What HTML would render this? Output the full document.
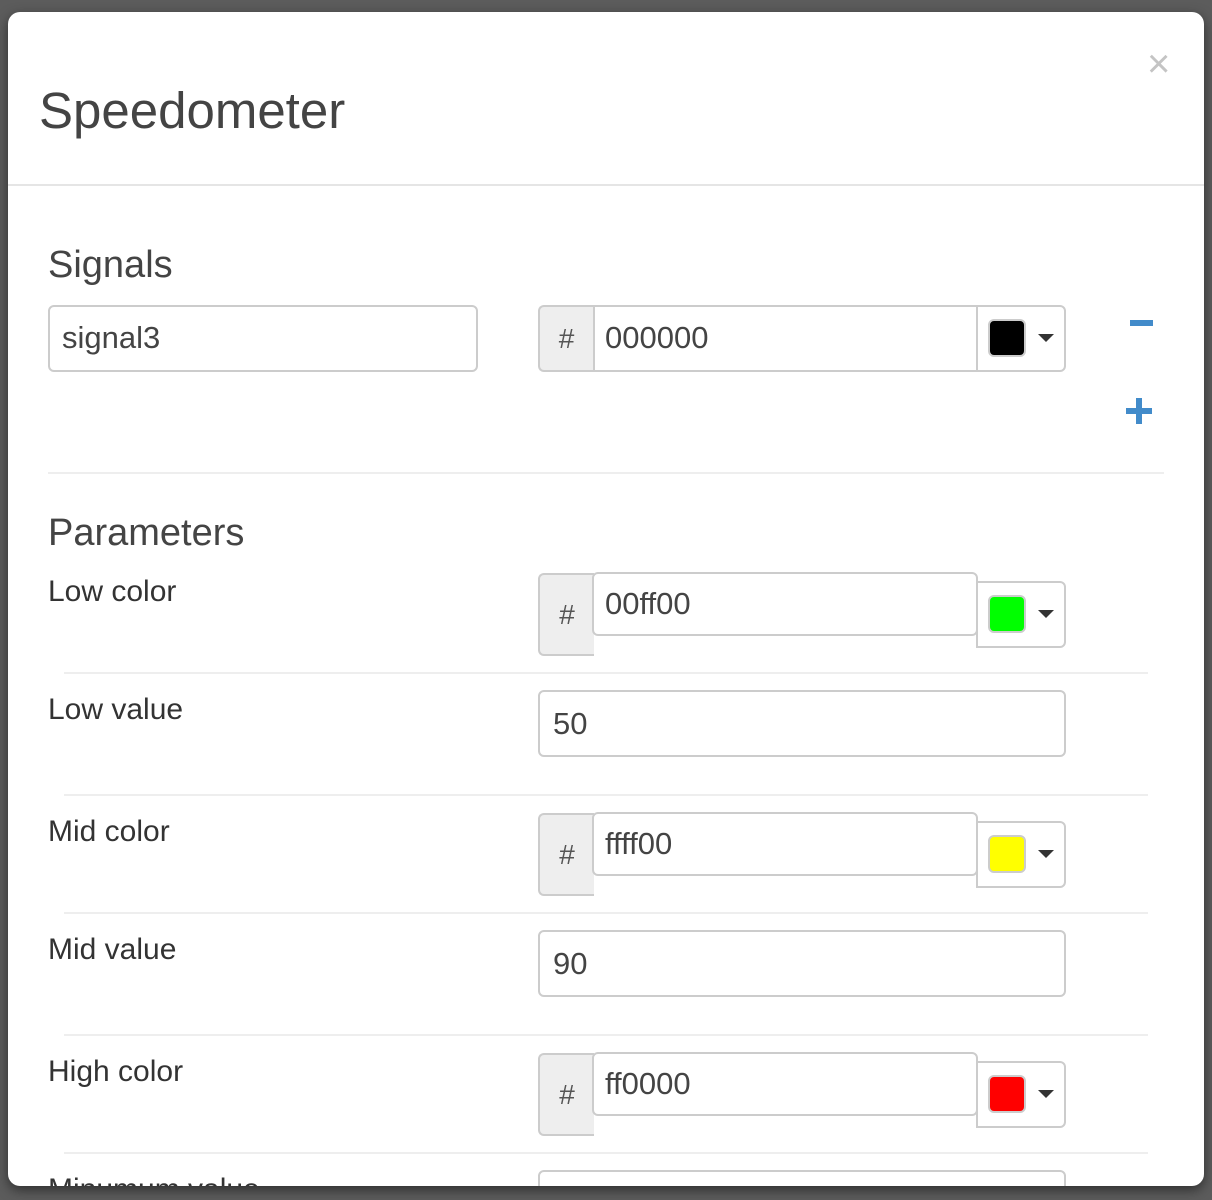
<!DOCTYPE html>
<html><head><style>
*{box-sizing:border-box;margin:0;padding:0}
body{width:1212px;height:1200px;background:#5c5c5c;position:relative;overflow:hidden;font-family:"Liberation Sans",sans-serif;color:#333}
.modal{position:absolute;left:8px;top:12px;width:1196px;height:1174px;background:#fff;border-radius:12px;overflow:hidden;box-shadow:0 4px 12px rgba(0,0,0,.5)}
.a{position:absolute}
.t{position:absolute;white-space:nowrap;line-height:1}
.box{position:absolute;border:2px solid #ccc;background:#fff}
.addon{position:absolute;background:#eee;border:2px solid #ccc;border-right:none;border-radius:6px 0 0 6px;font-size:28px;color:#555;display:flex;align-items:center;justify-content:center}
.hr{position:absolute;height:2px;background:#eee}
.sw{position:absolute;width:38px;height:38px;border-radius:6px;border:2px solid #ccc}
.caret{position:absolute;width:0;height:0;border-left:8px solid transparent;border-right:8px solid transparent;border-top:8px solid #333}
.lbl{font-size:30px;color:#333}
.val{font-size:31px;color:#444}
</style></head><body>
<div class="modal">
<div class="t" style="left:31px;top:73px;font-size:51px;color:#444">Speedometer</div>
<div class="t" style="left:1139px;top:32px;font-size:40px;color:#c4c4c4">×</div>
<div class="hr" style="left:0;top:172px;width:1196px;background:#e5e5e5"></div>

<div class="t" style="left:40px;top:234px;font-size:38px;color:#444">Signals</div>
<div class="box" style="left:40px;top:293px;width:430px;height:67px;border-radius:6px"></div>
<div class="t val" style="left:54px;top:310px">signal3</div>
<div class="addon" style="left:530px;top:293px;width:55px;height:67px">#</div>
<div class="box" style="left:585px;top:293px;width:384px;height:67px;border-left:2px solid #ccc;border-right:none"></div>
<div class="t val" style="left:597px;top:310px">000000</div>
<div class="box" style="left:968px;top:293px;width:90px;height:67px;border-radius:0 6px 6px 0"></div>
<div class="sw" style="left:980px;top:307px;background:#000"></div>
<div class="caret" style="left:1030px;top:322px"></div>
<div class="a" style="left:1122px;top:308px;width:23px;height:6px;background:#428bca"></div>
<div class="a" style="left:1118px;top:396px;width:26px;height:6px;background:#428bca"></div>
<div class="a" style="left:1128px;top:386px;width:6px;height:26px;background:#428bca"></div>
<div class="hr" style="left:40px;top:460px;width:1116px"></div>

<div class="t" style="left:40px;top:502px;font-size:38px;color:#444">Parameters</div>

<div class="t lbl" style="left:40px;top:565px">Low color</div>
<div class="addon" style="left:530px;top:561px;width:56px;height:83px;border-bottom:2px solid #ccc">#</div>
<div class="box" style="left:584px;top:560px;width:386px;height:64px;border-radius:6px"></div>
<div class="t val" style="left:597px;top:576px">00ff00</div>
<div class="box" style="left:968px;top:569px;width:90px;height:67px;border-radius:0 6px 6px 0"></div>
<div class="sw" style="left:980px;top:583px;background:#0f0"></div>
<div class="caret" style="left:1030px;top:598px"></div>
<div class="hr" style="left:56px;top:660px;width:1084px"></div>

<div class="t lbl" style="left:40px;top:683px">Low value</div>
<div class="box" style="left:530px;top:678px;width:528px;height:67px;border-radius:6px"></div>
<div class="t val" style="left:545px;top:696px">50</div>
<div class="hr" style="left:56px;top:782px;width:1084px"></div>

<div class="t lbl" style="left:40px;top:805px">Mid color</div>
<div class="addon" style="left:530px;top:801px;width:56px;height:83px;border-bottom:2px solid #ccc">#</div>
<div class="box" style="left:584px;top:800px;width:386px;height:64px;border-radius:6px"></div>
<div class="t val" style="left:597px;top:816px">ffff00</div>
<div class="box" style="left:968px;top:809px;width:90px;height:67px;border-radius:0 6px 6px 0"></div>
<div class="sw" style="left:980px;top:823px;background:#ff0"></div>
<div class="caret" style="left:1030px;top:838px"></div>
<div class="hr" style="left:56px;top:900px;width:1084px"></div>

<div class="t lbl" style="left:40px;top:923px">Mid value</div>
<div class="box" style="left:530px;top:918px;width:528px;height:67px;border-radius:6px"></div>
<div class="t val" style="left:545px;top:936px">90</div>
<div class="hr" style="left:56px;top:1022px;width:1084px"></div>

<div class="t lbl" style="left:40px;top:1045px">High color</div>
<div class="addon" style="left:530px;top:1041px;width:56px;height:83px;border-bottom:2px solid #ccc">#</div>
<div class="box" style="left:584px;top:1040px;width:386px;height:64px;border-radius:6px"></div>
<div class="t val" style="left:597px;top:1056px">ff0000</div>
<div class="box" style="left:968px;top:1049px;width:90px;height:67px;border-radius:0 6px 6px 0"></div>
<div class="sw" style="left:980px;top:1063px;background:#f00"></div>
<div class="caret" style="left:1030px;top:1078px"></div>
<div class="hr" style="left:56px;top:1140px;width:1084px"></div>

<div class="t lbl" style="left:40px;top:1163px">Minumum value</div>
<div class="box" style="left:530px;top:1158px;width:528px;height:67px;border-radius:6px"></div>
</div>
</body></html>
